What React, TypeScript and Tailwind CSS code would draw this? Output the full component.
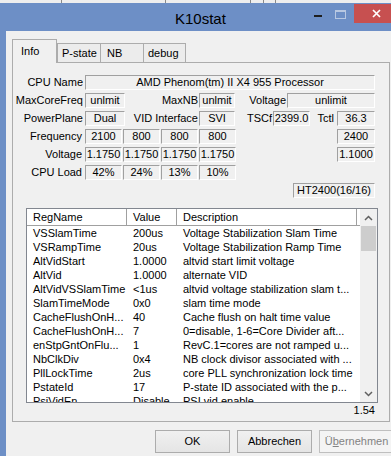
import React from "react";

type P = { w: string; children?: React.ReactNode; extra?: string };

function F({ w, children, extra = "" }: P) {
  return (
    <div
      className={`${w} ${extra} h-[15px] shrink-0 border border-t-[#a0a0a0] border-l-[#a0a0a0] border-b-white border-r-white text-center leading-[13px] whitespace-nowrap overflow-hidden`}
    >
      {children}
    </div>
  );
}

function L({ w, children, extra = "" }: P) {
  return (
    <div className={`${w} ${extra} h-[15px] shrink-0 text-right leading-[15px] whitespace-nowrap`}>
      {children}
    </div>
  );
}

const rows: [string, string, string][] = [
  ["VSSlamTime", "200us", "Voltage Stabilization Slam Time"],
  ["VSRampTime", "20us", "Voltage Stabilization Ramp Time"],
  ["AltVidStart", "1.0000", "altvid start limit voltage"],
  ["AltVid", "1.0000", "alternate VID"],
  ["AltVidVSSlamTime", "<1us", "altvid voltage stabilization slam t..."],
  ["SlamTimeMode", "0x0", "slam time mode"],
  ["CacheFlushOnH...", "40", "Cache flush on halt time value"],
  ["CacheFlushOnH...", "7", "0=disable, 1-6=Core Divider aft..."],
  ["enStpGntOnFlu...", "1", "RevC.1=cores are not ramped u..."],
  ["NbClkDiv", "0x4", "NB clock divisor associated with ..."],
  ["PllLockTime", "2us", "core PLL synchronization lock time"],
  ["PstateId", "17", "P-state ID associated with the p..."],
  ["PsiVidEn", "Disable", "PSI vid enable"],
];

export default function App() {
  return (
    <div className="w-[391px] h-[456px] overflow-hidden bg-[#6d8fc6] font-['Liberation_Sans',Arial,sans-serif] text-[11px] text-black flex flex-col">
      {/* window behind */}
      <div className="h-[3px] shrink-0 bg-[#eeeeee] flex">
        <div className="w-[61px]" />
        <div className="w-px bg-[#8a8a8a]" />
        <div className="w-[103px]" />
        <div className="w-px bg-[#8a8a8a]" />
        <div className="w-[84px]" />
        <div className="w-px bg-[#8a8a8a]" />
        <div className="w-[12px]" />
        <div className="w-px bg-[#8a8a8a]" />
        <div className="w-[11px]" />
        <div className="w-px bg-[#8a8a8a]" />
      </div>
      {/* title bar */}
      <div className="h-[28px] shrink-0 flex w-[398px]">
        <div className="pl-[175px] pt-[2px] text-[15px] leading-[28px] text-black">K10stat</div>
        <div className="ml-auto flex items-start pt-[1px]">
          <div className="w-[24px] h-[19px] pt-[11px] flex justify-center">
            <div className="w-[8px] h-[2px] bg-[#1e1e1e]" />
          </div>
          <div className="w-[20px] h-[19px] pt-[6px] flex justify-center">
            <div className="w-[11px] h-[9px] border border-t-2 border-[#b8c8e2]" />
          </div>
          <div className="ml-[4px] w-[44px] h-[19px] bg-[#c75050] flex items-center justify-center">
            <svg width="9" height="9" viewBox="0 0 9 9">
              <path d="M1 1 L8 8 M8 1 L1 8" stroke="white" strokeWidth="1.7" />
            </svg>
          </div>
        </div>
      </div>
      {/* client */}
      <div className="flex-1 flex">
        <div className="w-[6px] shrink-0" />
        <div className="flex-1 bg-[#f0f0f0] flex flex-col pl-[6px]">
          {/* tabs */}
          <div className="mt-[8px] h-[23px] flex items-end relative z-10">
            <div className="w-[45px] h-[24px] -mb-px bg-[#f0f0f0] border border-b-0 border-[#acacac] pl-[8px] pt-[5px] leading-[13px]">
              Info
            </div>
            <div className="w-[44px] h-[19px] border border-b-0 border-[#acacac] bg-[#ececec] pl-[4px] pt-[3px] leading-[13px]">
              P-state
            </div>
            <div className="w-[43px] h-[19px] border-t border-r border-[#acacac] bg-[#ececec] pl-[6px] pt-[3px] leading-[13px]">
              NB
            </div>
            <div className="w-[42px] h-[19px] border-t border-r border-[#acacac] bg-[#ececec] pl-[4px] pt-[3px] leading-[13px]">
              debug
            </div>
          </div>
          {/* panel */}
          <div className="w-[378px] h-[360px] shrink-0 border border-[#acacac] bg-[#f0f0f0] pt-[12px] flex flex-col">
            <div className="w-[362px] flex flex-col gap-[3px]">
              <div className="flex">
                <L w="w-[72px]" extra="pr-[2px]">CPU Name</L>
                <F w="w-[290px]">AMD Phenom(tm) II X4 955 Processor</F>
              </div>
              <div className="flex">
                <L w="w-[72px]" extra="pr-[2px]">MaxCoreFreq</L>
                <F w="w-[40px]">unlmit</F>
                <L w="w-[74px]" extra="pr-[1px]">MaxNB</L>
                <F w="w-[36px]">unlmit</F>
                <L w="w-[52px]" extra="pr-[1px]">Voltage</L>
                <F w="w-[88px]">unlimit</F>
              </div>
              <div className="flex">
                <L w="w-[72px]" extra="pr-[2px]">PowerPlane</L>
                <F w="w-[40px]">Dual</F>
                <L w="w-[74px]" extra="pr-[1px]">VID Interface</L>
                <F w="w-[36px]">SVI</F>
                <L w="w-[38px]" extra="pr-[1px]">TSCf</L>
                <F w="w-[37px]">2399.0</F>
                <L w="w-[27px]" extra="pr-[3px]">Tctl</L>
                <F w="w-[38px]">36.3</F>
              </div>
              <div className="flex gap-[1px]">
                <L w="w-[71px]" extra="pr-[2px]">Frequency</L>
                <F w="w-[37px]">2100</F>
                <F w="w-[37px]">800</F>
                <F w="w-[37px]">800</F>
                <F w="w-[37px]">800</F>
                <F w="w-[38px]" extra="ml-auto">2400</F>
              </div>
              <div className="flex gap-[1px]">
                <L w="w-[71px]" extra="pr-[2px]">Voltage</L>
                <F w="w-[37px]">1.1750</F>
                <F w="w-[37px]">1.1750</F>
                <F w="w-[37px]">1.1750</F>
                <F w="w-[37px]">1.1750</F>
                <F w="w-[38px]" extra="ml-auto">1.1000</F>
              </div>
              <div className="flex gap-[1px]">
                <L w="w-[71px]" extra="pr-[2px]">CPU Load</L>
                <F w="w-[37px]">42%</F>
                <F w="w-[37px]">24%</F>
                <F w="w-[37px]">13%</F>
                <F w="w-[37px]">10%</F>
              </div>
              <div className="flex">
                <F w="w-[82px]" extra="ml-auto">HT2400(16/16)</F>
              </div>
            </div>
            {/* list */}
            <div className="ml-[13px] mt-[10px] w-[352px] h-[195px] shrink-0 border border-[#828790] bg-white flex">
              <div className="flex-1 flex flex-col overflow-hidden">
                <div className="h-[17px] shrink-0 flex border-b border-[#a0a0a0] leading-[16px]">
                  <div className="w-[100px] shrink-0 pl-[6px] border-r border-[#a0a0a0] shadow-[inset_1px_1px_0_#ffffff]">RegName</div>
                  <div className="w-[50px] shrink-0 pl-[6px] border-r border-[#a0a0a0]">Value</div>
                  <div className="w-[180px] shrink-0 pl-[6px] border-r border-[#a0a0a0]">Description</div>
                  <div className="flex-1" />
                </div>
                {rows.map((r, i) => (
                  <div key={i} className="h-[14px] shrink-0 flex leading-[14px] whitespace-nowrap">
                    <div className="w-[100px] shrink-0 pl-[6px] overflow-hidden">{r[0]}</div>
                    <div className="w-[50px] shrink-0 pl-[6px] overflow-hidden">{r[1]}</div>
                    <div className="w-[180px] shrink-0 pl-[6px] overflow-hidden">{r[2]}</div>
                  </div>
                ))}
              </div>
              <div className="w-[17px] shrink-0 bg-[#f0f0f0] flex flex-col">
                <div className="h-[17px] flex items-center justify-center">
                  <svg width="9" height="6" viewBox="0 0 9 6">
                    <path d="M1 5 L4.5 1.5 L8 5" stroke="#606060" strokeWidth="1.5" fill="none" />
                  </svg>
                </div>
                <div className="mx-px h-[25px] bg-[#cdcdcd]" />
                <div className="flex-1" />
                <div className="h-[17px] flex items-center justify-center">
                  <svg width="9" height="6" viewBox="0 0 9 6">
                    <path d="M1 1 L4.5 4.5 L8 1" stroke="#606060" strokeWidth="1.5" fill="none" />
                  </svg>
                </div>
              </div>
            </div>
            <div className="w-[362px] text-right leading-[13px] mt-[1px]">1.54</div>
          </div>
          {/* buttons */}
          <div className="mt-[8px] flex gap-[7px] pl-[143px]">
            <div className="w-[75px] h-[23px] shrink-0 border border-[#acacac] bg-linear-to-b from-[#f0f0f0] to-[#e5e5e5] flex items-center justify-center">
              OK
            </div>
            <div className="w-[75px] h-[23px] shrink-0 border border-[#acacac] bg-linear-to-b from-[#f0f0f0] to-[#e5e5e5] flex items-center justify-center">
              Abbrechen
            </div>
            <div className="w-[75px] h-[23px] shrink-0 border border-[#bfbfbf] bg-[#f4f4f4] text-[#838383] flex items-center justify-center">
              Ü<span className="underline">b</span>ernehmen
            </div>
          </div>
        </div>
      </div>
    </div>
  );
}
